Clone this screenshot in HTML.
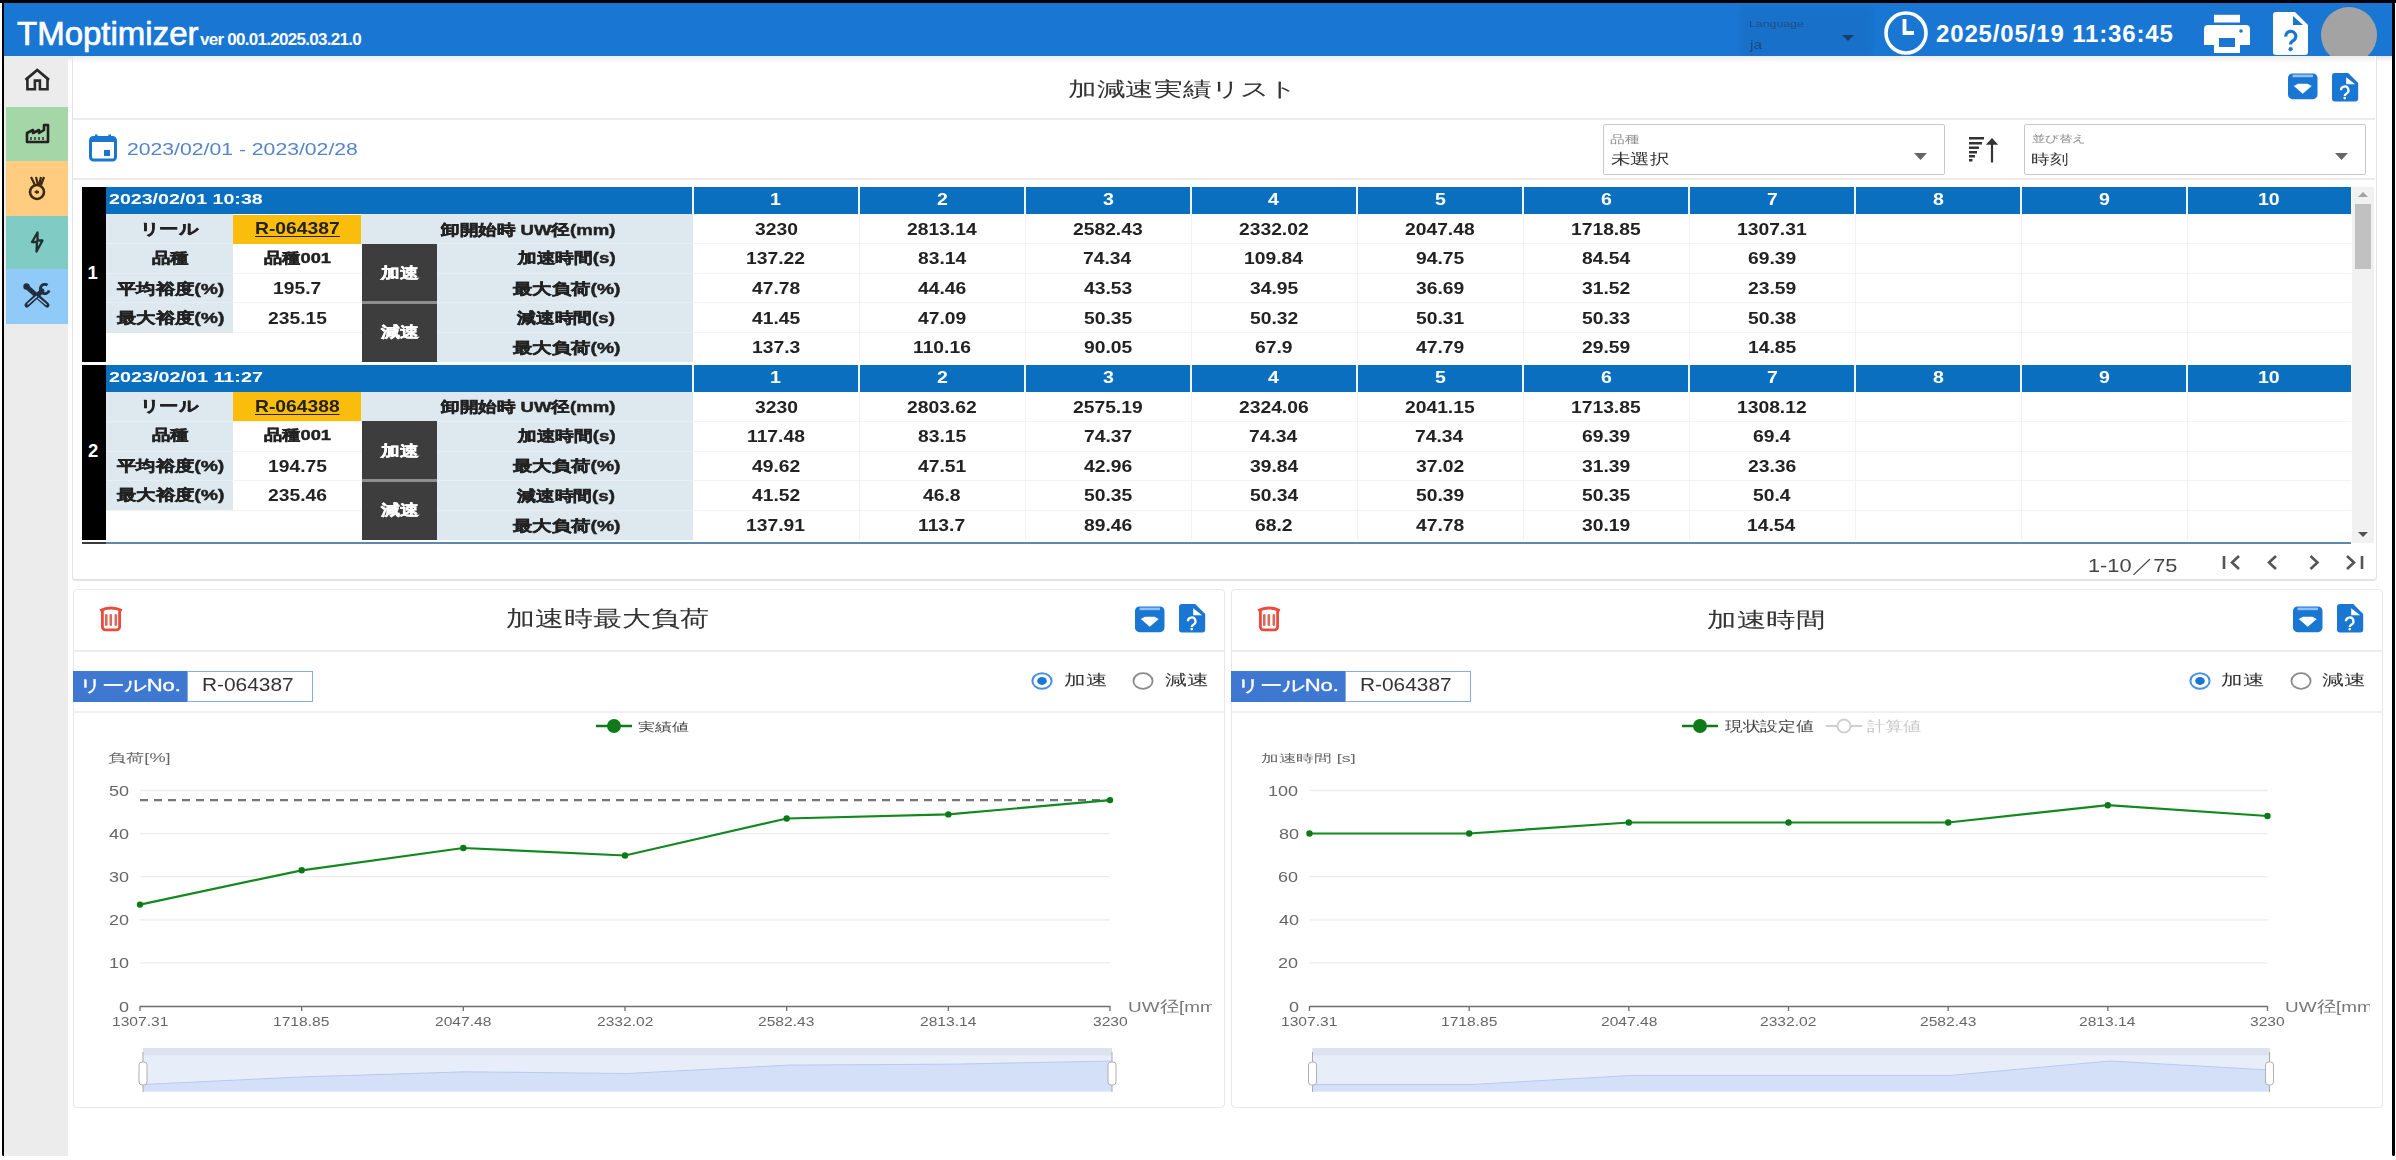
<!DOCTYPE html><html><head><meta charset="utf-8"><style>
html,body{margin:0;padding:0;}body{width:2396px;height:1160px;position:relative;overflow:hidden;background:#fff;font-family:"Liberation Sans",sans-serif;}
</style></head><body>
<div style="position:absolute;left:0px;top:0px;width:2396px;height:3px;background:#000"></div>
<div style="position:absolute;left:1.5px;top:0px;width:3px;height:1156px;background:#000;border-radius:0 0 2px 2px"></div>
<div style="position:absolute;left:2392px;top:0px;width:3.2px;height:1156px;background:#000;border-radius:0 0 2px 2px"></div>
<div style="position:absolute;left:4px;top:3px;width:2388px;height:53px;background:#1976d2"></div>
<div style="position:absolute;left:4px;top:56px;width:2388px;height:6px;background:linear-gradient(rgba(0,0,0,0.10),rgba(0,0,0,0))"></div>
<div style="position:absolute;top:17.07px;font-size:33px;line-height:33px;color:#fff;font-weight:normal;white-space:nowrap;left:17.00px;-webkit-text-stroke:0.7px #fff;">TMoptimizer</div>
<div style="position:absolute;top:30.61px;font-size:17px;line-height:17px;color:#fff;font-weight:bold;white-space:nowrap;letter-spacing:-0.72px;left:200.00px;">ver 00.01.2025.03.21.0</div>
<div style="position:absolute;left:1741px;top:7px;width:131px;height:48px;background:rgba(10,40,90,0.07);border-radius:4px;filter:blur(2px)"></div>
<div style="position:absolute;left:1749.26px;top:19.02px;font-size:9.44px;line-height:9.44px;color:#1d4f86;font-weight:normal;white-space:nowrap;transform-origin:0 0;transform:scaleX(1.3073);">Language</div>
<div style="position:absolute;left:1749.71px;top:39.01px;font-size:12.77px;line-height:12.77px;color:#1d4a7e;font-weight:normal;white-space:nowrap;transform-origin:0 0;transform:scaleX(1.2056);">ja</div>
<svg style="position:absolute;left:1842px;top:35px;overflow:visible" width="12" height="6" viewBox="0 0 12 6"><path d="M0 0H12L6 6Z" fill="#173f6e"/></svg>
<svg style="position:absolute;left:1882px;top:10px;overflow:visible" width="48" height="46" viewBox="0 0 48 46"><circle cx="24" cy="23" r="20" fill="none" stroke="#fff" stroke-width="3.6"/><path d="M22.5 9V23H32" fill="none" stroke="#fff" stroke-width="3.8"/></svg>
<div style="position:absolute;top:21.98px;font-size:24px;line-height:24px;color:#fff;font-weight:bold;white-space:nowrap;letter-spacing:0.85px;left:1936.00px;">2025/05/19 11:36:45</div>
<svg style="position:absolute;left:2204px;top:14px;overflow:visible" width="46" height="40" viewBox="0 0 46 40"><rect x="10" y="0.8" width="26" height="7.7" fill="#fff"/><path d="M4 11H42A4 4 0 0 1 46 15V31H36V24H10V31H0V15A4 4 0 0 1 4 11Z" fill="#fff"/><circle cx="37" cy="17" r="1.8" fill="#1976d2"/><rect x="10" y="24" width="26" height="15" fill="#fff"/><rect x="15" y="24" width="16" height="9" fill="#1976d2"/></svg>
<svg style="position:absolute;left:2273px;top:12px;overflow:visible" width="36" height="43" viewBox="0 0 36 43"><path d="M3 0H22L35 13V40A3 3 0 0 1 32 43H3A3 3 0 0 1 0 40V3A3 3 0 0 1 3 0Z" fill="#fff"/><path d="M20 4V13H30Z" fill="#1976d2"/><path d="M12.8 24.6A5 5 0 1 1 19.6 28.9C18.1 29.9 17.6 30.6 17.6 32.6" fill="none" stroke="#1976d2" stroke-width="3.2"/><circle cx="17.6" cy="37.2" r="2.1" fill="#1976d2"/></svg>
<div style="position:absolute;left:2300px;top:3px;width:92px;height:53px;overflow:hidden"><div style="position:absolute;left:21.4px;top:3.6px;width:56px;height:56px;border-radius:50%;background:#a3a3a3"></div></div>
<div style="position:absolute;left:4px;top:56px;width:64px;height:1100px;background:#ececec"></div>
<div style="position:absolute;left:6px;top:107px;width:62px;height:54px;background:#a5d6a7"></div>
<div style="position:absolute;left:6px;top:161px;width:62px;height:55px;background:#ffcc80"></div>
<div style="position:absolute;left:6px;top:216px;width:62px;height:53px;background:#80cbc4"></div>
<div style="position:absolute;left:6px;top:269px;width:62px;height:55px;background:#90caf9"></div>
<svg style="position:absolute;left:18px;top:60px;overflow:visible" width="40" height="40" viewBox="0 0 40 40"><path d="M7.5 19.9L19.25 10L31 19.9" fill="none" stroke="#2a2a2a" stroke-width="2.7" stroke-linejoin="miter"/><path d="M9.4 18.4V29.2H16.9V20.6H21.9V29.2H29.5V18.4" fill="none" stroke="#2a2a2a" stroke-width="2.6"/></svg>
<svg style="position:absolute;left:24px;top:122px;overflow:visible" width="26" height="24" viewBox="0 0 26 24"><path d="M3 20V11L9 8V11L15 8V11L20 8V3H24V20Z" fill="none" stroke="#222" stroke-width="2.6" stroke-linejoin="round"/><path d="M7 15V18M11 15V18M15 15V18M19 15V18" stroke="#222" stroke-width="1.4"/></svg>
<svg style="position:absolute;left:26px;top:175px;overflow:visible" width="22" height="27" viewBox="0 0 22 27"><path d="M5 2L9 10M10 2L12 10M15 2L13 10M18 2L15 10" stroke="#3a2a10" stroke-width="2.2"/><ellipse cx="11" cy="17" rx="7" ry="7" fill="none" stroke="#3a2a10" stroke-width="2.6"/><path d="M8 17L11 15V19Z" fill="#3a2a10"/><circle cx="11.5" cy="17" r="1.6" fill="#3a2a10"/></svg>
<svg style="position:absolute;left:18px;top:222px;overflow:visible" width="40" height="40" viewBox="0 0 40 40"><path d="M19.5 10.5L14 20H19L18.5 29.5L24.5 18.5H19.5Z" fill="none" stroke="#1f2f2f" stroke-width="2.3" stroke-linejoin="round"/></svg>
<svg style="position:absolute;left:18px;top:278px;overflow:visible" width="40" height="36" viewBox="0 0 40 36"><path d="M9 9L29 27" stroke="#1f2f3f" stroke-width="5" stroke-linecap="round"/><path d="M18.5 18.5L28 26.5" stroke="#90caf9" stroke-width="1.5" stroke-linecap="round"/><path d="M9 27L24 13" stroke="#1f2f3f" stroke-width="5" stroke-linecap="round"/><path d="M10 26L18.5 18.5" stroke="#90caf9" stroke-width="1.5" stroke-linecap="round"/><path d="M29.5 7.2A4.6 4.6 0 1 0 31.2 12.5" fill="none" stroke="#1f2f3f" stroke-width="2.8"/><circle cx="8.5" cy="8.5" r="3.2" fill="#1f2f3f"/></svg>
<div style="position:absolute;left:72px;top:56px;width:2303px;height:523px;border:1px solid #e3e3e3;border-width:0 1px 2px 1px;border-top:none;border-radius:0 0 4px 4px;background:#fff"></div>
<div style="position:absolute;left:73px;top:56px;width:2302px;height:7px;background:linear-gradient(rgba(0,0,0,0.07),rgba(0,0,0,0))"></div>
<div style="position:absolute;left:1067.67px;top:79.48px;font-size:20.39px;line-height:20.39px;color:#333;font-weight:normal;white-space:nowrap;transform-origin:0 0;transform:scaleX(1.4321);">加減速実績リスト</div>
<div style="position:absolute;left:73px;top:118px;width:2302px;height:2px;background:#ececec"></div>
<div style="position:absolute;left:73px;top:178px;width:2302px;height:2px;background:#ececec"></div>
<svg style="position:absolute;left:2288.2px;top:73.3px;overflow:visible" width="29.5" height="26.2" viewBox="0 0 29.5 26.2"><rect x="0" y="0.5" width="29.5" height="25.7" rx="4.5" fill="#1976d2"/><rect x="4.5" y="1.6" width="20.5" height="2.6" fill="#8fc1f1"/><path d="M5.8 13.1L10 10.741999999999999H19.5L23.7 13.1L14.75 20.698Z" fill="#fff"/></svg>
<svg style="position:absolute;left:2331.6px;top:72.8px;overflow:visible" width="26.2" height="28.6" viewBox="0 0 26.2 28.6"><path d="M3 0H16.2L26.2 10V25.6A3 3 0 0 1 23.2 28.6H3A3 3 0 0 1 0 25.6V3A3 3 0 0 1 3 0Z" fill="#1976d2"/><path d="M14.2 4.3V11.3H23.2Z" fill="#fff"/><path d="M8.9 17.3A3.8 3.8 0 1 1 14.4 20.7C13.2 21.4 12.7 22 12.7 23.1" fill="none" stroke="#fff" stroke-width="2.2"/><circle cx="12.7" cy="25.1" r="1.3" fill="#fff"/></svg>
<svg style="position:absolute;left:88px;top:133px;overflow:visible" width="30" height="29" viewBox="0 0 30 29"><rect x="2.5" y="4.5" width="25" height="22.5" rx="3" fill="none" stroke="#1976d2" stroke-width="3"/><rect x="2.5" y="4.5" width="25" height="4.5" fill="#1976d2"/><rect x="7" y="1.5" width="2.6" height="5" fill="#1976d2"/><rect x="20.4" y="1.5" width="2.6" height="5" fill="#1976d2"/><rect x="16" y="17" width="6" height="6" fill="#1976d2"/></svg>
<div style="position:absolute;left:126.79px;top:141.86px;font-size:15.81px;line-height:15.81px;color:#5585c9;font-weight:normal;white-space:nowrap;transform-origin:0 0;transform:scaleX(1.3407);">2023/02/01 - 2023/02/28</div>
<div style="position:absolute;left:1603px;top:124px;width:340px;height:49px;border:1px solid #c9c9c9;border-radius:2px"></div>
<svg style="position:absolute;left:1914px;top:153px;overflow:visible" width="13" height="7" viewBox="0 0 13 7"><path d="M0 0H13L6.5 7Z" fill="#666"/></svg>
<div style="position:absolute;left:2024px;top:124px;width:340px;height:49px;border:1px solid #c9c9c9;border-radius:2px"></div>
<svg style="position:absolute;left:2335px;top:153px;overflow:visible" width="13" height="7" viewBox="0 0 13 7"><path d="M0 0H13L6.5 7Z" fill="#666"/></svg>
<div style="position:absolute;left:1610.28px;top:134.30px;font-size:10.75px;line-height:10.75px;color:#8a8a8a;font-weight:normal;white-space:nowrap;transform-origin:0 0;transform:scaleX(1.3348);">品種</div>
<div style="position:absolute;left:1610.66px;top:152.46px;font-size:14.59px;line-height:14.59px;color:#333;font-weight:normal;white-space:nowrap;transform-origin:0 0;transform:scaleX(1.2989);">未選択</div>
<div style="position:absolute;left:2032.11px;top:134.33px;font-size:10.40px;line-height:10.40px;color:#8a8a8a;font-weight:normal;white-space:nowrap;transform-origin:0 0;transform:scaleX(1.3446);">並び替え</div>
<div style="position:absolute;left:2031.34px;top:152.75px;font-size:13.80px;line-height:13.80px;color:#333;font-weight:normal;white-space:nowrap;transform-origin:0 0;transform:scaleX(1.3228);">時刻</div>
<svg style="position:absolute;left:1966px;top:134px;overflow:visible" width="36" height="32" viewBox="0 0 36 32"><g fill="#333"><rect x="3" y="3" width="15" height="2.5"/><rect x="3" y="8" width="13" height="2.5"/><rect x="3" y="12.5" width="10" height="2.5"/><rect x="3" y="17" width="8" height="2.5"/><rect x="3" y="21" width="6" height="2.5"/><rect x="3" y="25" width="3.5" height="2.5"/></g><path d="M26 28.5V8" stroke="#333" stroke-width="2.2"/><path d="M19.8 10.8L26 4L32.2 10.8Z" fill="#333"/></svg>
<div style="position:absolute;left:82px;top:187px;width:24px;height:175.25px;background:#000"></div>
<div style="position:absolute;left:87.54px;top:264.34px;font-size:18.50px;line-height:18.50px;color:#fff;font-weight:bold;white-space:nowrap;transform-origin:0 0;transform:scaleX(1.0000);">1</div>
<div style="position:absolute;left:106px;top:187px;width:2245px;height:27px;background:#0b6fbf"></div>
<div style="position:absolute;left:109.26px;top:192.32px;font-size:14.40px;line-height:14.40px;color:#fff;font-weight:bold;white-space:nowrap;transform-origin:0 0;transform:scaleX(1.3623);">2023/02/01 10:38</div>
<div style="position:absolute;left:692.0px;top:187px;width:2px;height:27px;background:#eef5fc"></div>
<div style="position:absolute;left:770.23px;top:191.21px;font-size:17.00px;line-height:17.00px;color:#fff;font-weight:bold;white-space:nowrap;transform-origin:0 0;transform:scaleX(1.1500);">1</div>
<div style="position:absolute;left:858.0px;top:187px;width:2px;height:27px;background:#eef5fc"></div>
<div style="position:absolute;left:936.62px;top:191.21px;font-size:17.00px;line-height:17.00px;color:#fff;font-weight:bold;white-space:nowrap;transform-origin:0 0;transform:scaleX(1.1500);">2</div>
<div style="position:absolute;left:1024.0px;top:187px;width:2px;height:27px;background:#eef5fc"></div>
<div style="position:absolute;left:1102.72px;top:191.21px;font-size:17.00px;line-height:17.00px;color:#fff;font-weight:bold;white-space:nowrap;transform-origin:0 0;transform:scaleX(1.1500);">3</div>
<div style="position:absolute;left:1190.0px;top:187px;width:2px;height:27px;background:#eef5fc"></div>
<div style="position:absolute;left:1268.43px;top:191.21px;font-size:17.00px;line-height:17.00px;color:#fff;font-weight:bold;white-space:nowrap;transform-origin:0 0;transform:scaleX(1.1500);">4</div>
<div style="position:absolute;left:1356.0px;top:187px;width:2px;height:27px;background:#eef5fc"></div>
<div style="position:absolute;left:1434.53px;top:191.21px;font-size:17.00px;line-height:17.00px;color:#fff;font-weight:bold;white-space:nowrap;transform-origin:0 0;transform:scaleX(1.1500);">5</div>
<div style="position:absolute;left:1522.0px;top:187px;width:2px;height:27px;background:#eef5fc"></div>
<div style="position:absolute;left:1600.62px;top:191.21px;font-size:17.00px;line-height:17.00px;color:#fff;font-weight:bold;white-space:nowrap;transform-origin:0 0;transform:scaleX(1.1500);">6</div>
<div style="position:absolute;left:1688.0px;top:187px;width:2px;height:27px;background:#eef5fc"></div>
<div style="position:absolute;left:1766.53px;top:191.21px;font-size:17.00px;line-height:17.00px;color:#fff;font-weight:bold;white-space:nowrap;transform-origin:0 0;transform:scaleX(1.1500);">7</div>
<div style="position:absolute;left:1854.0px;top:187px;width:2px;height:27px;background:#eef5fc"></div>
<div style="position:absolute;left:1932.53px;top:191.21px;font-size:17.00px;line-height:17.00px;color:#fff;font-weight:bold;white-space:nowrap;transform-origin:0 0;transform:scaleX(1.1500);">8</div>
<div style="position:absolute;left:2020.0px;top:187px;width:2px;height:27px;background:#eef5fc"></div>
<div style="position:absolute;left:2098.62px;top:191.21px;font-size:17.00px;line-height:17.00px;color:#fff;font-weight:bold;white-space:nowrap;transform-origin:0 0;transform:scaleX(1.1500);">9</div>
<div style="position:absolute;left:2186.0px;top:187px;width:2px;height:27px;background:#eef5fc"></div>
<div style="position:absolute;left:2257.89px;top:191.21px;font-size:17.00px;line-height:17.00px;color:#fff;font-weight:bold;white-space:nowrap;transform-origin:0 0;transform:scaleX(1.1500);">10</div>
<div style="position:absolute;left:106px;top:243.15px;width:2245px;height:1px;background:#f5f2f2"></div>
<div style="position:absolute;left:106px;top:272.8px;width:2245px;height:1px;background:#f5f2f2"></div>
<div style="position:absolute;left:106px;top:302.45px;width:2245px;height:1px;background:#f5f2f2"></div>
<div style="position:absolute;left:106px;top:332.1px;width:2245px;height:1px;background:#f5f2f2"></div>
<div style="position:absolute;left:858.5px;top:214px;width:1px;height:148.25px;background:#f8f0f0"></div>
<div style="position:absolute;left:1024.5px;top:214px;width:1px;height:148.25px;background:#f8f0f0"></div>
<div style="position:absolute;left:1190.5px;top:214px;width:1px;height:148.25px;background:#f8f0f0"></div>
<div style="position:absolute;left:1356.5px;top:214px;width:1px;height:148.25px;background:#f8f0f0"></div>
<div style="position:absolute;left:1522.5px;top:214px;width:1px;height:148.25px;background:#f8f0f0"></div>
<div style="position:absolute;left:1688.5px;top:214px;width:1px;height:148.25px;background:#f8f0f0"></div>
<div style="position:absolute;left:1854.5px;top:214px;width:1px;height:148.25px;background:#f8f0f0"></div>
<div style="position:absolute;left:2020.5px;top:214px;width:1px;height:148.25px;background:#f8f0f0"></div>
<div style="position:absolute;left:2186.5px;top:214px;width:1px;height:148.25px;background:#f8f0f0"></div>
<div style="position:absolute;left:106px;top:214px;width:127px;height:118.6px;background:#dde8ef"></div>
<div style="position:absolute;left:106px;top:243.15px;width:127px;height:1px;background:#e6eef3"></div>
<div style="position:absolute;left:106px;top:272.8px;width:127px;height:1px;background:#e6eef3"></div>
<div style="position:absolute;left:106px;top:302.45px;width:127px;height:1px;background:#e6eef3"></div>
<div style="position:absolute;left:233px;top:214.5px;width:128px;height:29.15px;background:#fbbd0c"></div>
<div style="position:absolute;left:361px;top:214px;width:332px;height:29.65px;background:#dde8ef"></div>
<div style="position:absolute;left:437px;top:243.65px;width:256px;height:118.6px;background:#dde8ef"></div>
<div style="position:absolute;left:437px;top:243.15px;width:256px;height:1px;background:#e8eef2"></div>
<div style="position:absolute;left:437px;top:272.8px;width:256px;height:1px;background:#e8eef2"></div>
<div style="position:absolute;left:437px;top:302.45px;width:256px;height:1px;background:#e8eef2"></div>
<div style="position:absolute;left:437px;top:332.1px;width:256px;height:1px;background:#e8eef2"></div>
<div style="position:absolute;left:362px;top:243.65px;width:75px;height:59.3px;background:#3d3d3d"></div>
<div style="position:absolute;left:362px;top:302.95px;width:75px;height:59.3px;background:#3d3d3d"></div>
<div style="position:absolute;left:362px;top:301.45px;width:75px;height:3px;background:#8e8e8e"></div>
<div style="position:absolute;left:139.59px;top:220.60px;font-size:15.00px;line-height:15.00px;color:#222;font-weight:bold;white-space:nowrap;transform-origin:0 0;transform:scaleX(1.2886);-webkit-text-stroke:0.45px #222;">リール</div>
<div style="position:absolute;left:152.10px;top:249.73px;font-size:15.00px;line-height:15.00px;color:#222;font-weight:bold;white-space:nowrap;transform-origin:0 0;transform:scaleX(1.2279);-webkit-text-stroke:0.45px #222;">品種</div>
<div style="position:absolute;left:117.34px;top:280.63px;font-size:15.00px;line-height:15.00px;color:#222;font-weight:bold;white-space:nowrap;transform-origin:0 0;transform:scaleX(1.2869);-webkit-text-stroke:0.45px #222;">平均裕度(%)</div>
<div style="position:absolute;left:117.15px;top:309.68px;font-size:15.00px;line-height:15.00px;color:#222;font-weight:bold;white-space:nowrap;transform-origin:0 0;transform:scaleX(1.2893);-webkit-text-stroke:0.45px #222;">最大裕度(%)</div>
<div style="position:absolute;left:255.09px;top:220.28px;font-size:16.20px;line-height:16.20px;color:#222;font-weight:bold;white-space:nowrap;transform-origin:0 0;transform:scaleX(1.1926);text-decoration:underline;text-underline-offset:2px;">R-064387</div>
<div style="position:absolute;left:263.70px;top:249.73px;font-size:15.00px;line-height:15.00px;color:#222;font-weight:bold;white-space:nowrap;transform-origin:0 0;transform:scaleX(1.2162);-webkit-text-stroke:0.45px #222;">品種001</div>
<div style="position:absolute;left:273.15px;top:280.29px;font-size:16.20px;line-height:16.20px;color:#222;font-weight:bold;white-space:nowrap;transform-origin:0 0;transform:scaleX(1.1900);">195.7</div>
<div style="position:absolute;left:267.98px;top:309.79px;font-size:16.20px;line-height:16.20px;color:#222;font-weight:bold;white-space:nowrap;transform-origin:0 0;transform:scaleX(1.1900);">235.15</div>
<div style="position:absolute;left:440.82px;top:221.58px;font-size:15.00px;line-height:15.00px;color:#222;font-weight:bold;white-space:nowrap;transform-origin:0 0;transform:scaleX(1.2386);-webkit-text-stroke:0.45px #222;">卸開始時 UW径(mm)</div>
<div style="position:absolute;left:517.61px;top:250.28px;font-size:15.00px;line-height:15.00px;color:#222;font-weight:bold;white-space:nowrap;transform-origin:0 0;transform:scaleX(1.2465);-webkit-text-stroke:0.45px #222;">加速時間(s)</div>
<div style="position:absolute;left:512.75px;top:280.55px;font-size:15.00px;line-height:15.00px;color:#222;font-weight:bold;white-space:nowrap;transform-origin:0 0;transform:scaleX(1.2905);-webkit-text-stroke:0.45px #222;">最大負荷(%)</div>
<div style="position:absolute;left:517.24px;top:309.88px;font-size:15.00px;line-height:15.00px;color:#222;font-weight:bold;white-space:nowrap;transform-origin:0 0;transform:scaleX(1.2513);-webkit-text-stroke:0.45px #222;">減速時間(s)</div>
<div style="position:absolute;left:512.75px;top:340.15px;font-size:15.00px;line-height:15.00px;color:#222;font-weight:bold;white-space:nowrap;transform-origin:0 0;transform:scaleX(1.2905);-webkit-text-stroke:0.45px #222;">最大負荷(%)</div>
<div style="position:absolute;left:381.41px;top:265.13px;font-size:15.00px;line-height:15.00px;color:#fff;font-weight:bold;white-space:nowrap;transform-origin:0 0;transform:scaleX(1.2475);-webkit-text-stroke:0.45px #fff;">加速</div>
<div style="position:absolute;left:381.04px;top:324.23px;font-size:15.00px;line-height:15.00px;color:#fff;font-weight:bold;white-space:nowrap;transform-origin:0 0;transform:scaleX(1.2600);-webkit-text-stroke:0.45px #fff;">減速</div>
<div style="position:absolute;left:754.71px;top:220.89px;font-size:16.20px;line-height:16.20px;color:#222;font-weight:bold;white-space:nowrap;transform-origin:0 0;transform:scaleX(1.1900);">3230</div>
<div style="position:absolute;left:906.83px;top:220.89px;font-size:16.20px;line-height:16.20px;color:#222;font-weight:bold;white-space:nowrap;transform-origin:0 0;transform:scaleX(1.1900);">2813.14</div>
<div style="position:absolute;left:1073.22px;top:220.89px;font-size:16.20px;line-height:16.20px;color:#222;font-weight:bold;white-space:nowrap;transform-origin:0 0;transform:scaleX(1.1900);">2582.43</div>
<div style="position:absolute;left:1239.22px;top:220.89px;font-size:16.20px;line-height:16.20px;color:#222;font-weight:bold;white-space:nowrap;transform-origin:0 0;transform:scaleX(1.1900);">2332.02</div>
<div style="position:absolute;left:1405.12px;top:220.89px;font-size:16.20px;line-height:16.20px;color:#222;font-weight:bold;white-space:nowrap;transform-origin:0 0;transform:scaleX(1.1900);">2047.48</div>
<div style="position:absolute;left:1570.83px;top:220.89px;font-size:16.20px;line-height:16.20px;color:#222;font-weight:bold;white-space:nowrap;transform-origin:0 0;transform:scaleX(1.1900);">1718.85</div>
<div style="position:absolute;left:1736.83px;top:220.89px;font-size:16.20px;line-height:16.20px;color:#222;font-weight:bold;white-space:nowrap;transform-origin:0 0;transform:scaleX(1.1900);">1307.31</div>
<div style="position:absolute;left:746.29px;top:250.49px;font-size:16.20px;line-height:16.20px;color:#222;font-weight:bold;white-space:nowrap;transform-origin:0 0;transform:scaleX(1.1900);">137.22</div>
<div style="position:absolute;left:917.55px;top:250.49px;font-size:16.20px;line-height:16.20px;color:#222;font-weight:bold;white-space:nowrap;transform-origin:0 0;transform:scaleX(1.1900);">83.14</div>
<div style="position:absolute;left:1083.46px;top:250.49px;font-size:16.20px;line-height:16.20px;color:#222;font-weight:bold;white-space:nowrap;transform-origin:0 0;transform:scaleX(1.1900);">74.34</div>
<div style="position:absolute;left:1243.90px;top:250.49px;font-size:16.20px;line-height:16.20px;color:#222;font-weight:bold;white-space:nowrap;transform-origin:0 0;transform:scaleX(1.1900);">109.84</div>
<div style="position:absolute;left:1415.84px;top:250.49px;font-size:16.20px;line-height:16.20px;color:#222;font-weight:bold;white-space:nowrap;transform-origin:0 0;transform:scaleX(1.1900);">94.75</div>
<div style="position:absolute;left:1581.55px;top:250.49px;font-size:16.20px;line-height:16.20px;color:#222;font-weight:bold;white-space:nowrap;transform-origin:0 0;transform:scaleX(1.1900);">84.54</div>
<div style="position:absolute;left:1747.94px;top:250.49px;font-size:16.20px;line-height:16.20px;color:#222;font-weight:bold;white-space:nowrap;transform-origin:0 0;transform:scaleX(1.1900);">69.39</div>
<div style="position:absolute;left:752.03px;top:280.09px;font-size:16.20px;line-height:16.20px;color:#222;font-weight:bold;white-space:nowrap;transform-origin:0 0;transform:scaleX(1.1900);">47.78</div>
<div style="position:absolute;left:918.13px;top:280.09px;font-size:16.20px;line-height:16.20px;color:#222;font-weight:bold;white-space:nowrap;transform-origin:0 0;transform:scaleX(1.1900);">44.46</div>
<div style="position:absolute;left:1084.13px;top:280.09px;font-size:16.20px;line-height:16.20px;color:#222;font-weight:bold;white-space:nowrap;transform-origin:0 0;transform:scaleX(1.1900);">43.53</div>
<div style="position:absolute;left:1249.94px;top:280.09px;font-size:16.20px;line-height:16.20px;color:#222;font-weight:bold;white-space:nowrap;transform-origin:0 0;transform:scaleX(1.1900);">34.95</div>
<div style="position:absolute;left:1416.03px;top:280.09px;font-size:16.20px;line-height:16.20px;color:#222;font-weight:bold;white-space:nowrap;transform-origin:0 0;transform:scaleX(1.1900);">36.69</div>
<div style="position:absolute;left:1582.03px;top:280.09px;font-size:16.20px;line-height:16.20px;color:#222;font-weight:bold;white-space:nowrap;transform-origin:0 0;transform:scaleX(1.1900);">31.52</div>
<div style="position:absolute;left:1747.94px;top:280.09px;font-size:16.20px;line-height:16.20px;color:#222;font-weight:bold;white-space:nowrap;transform-origin:0 0;transform:scaleX(1.1900);">23.59</div>
<div style="position:absolute;left:752.03px;top:309.69px;font-size:16.20px;line-height:16.20px;color:#222;font-weight:bold;white-space:nowrap;transform-origin:0 0;transform:scaleX(1.1900);">41.45</div>
<div style="position:absolute;left:918.13px;top:309.69px;font-size:16.20px;line-height:16.20px;color:#222;font-weight:bold;white-space:nowrap;transform-origin:0 0;transform:scaleX(1.1900);">47.09</div>
<div style="position:absolute;left:1083.84px;top:309.69px;font-size:16.20px;line-height:16.20px;color:#222;font-weight:bold;white-space:nowrap;transform-origin:0 0;transform:scaleX(1.1900);">50.35</div>
<div style="position:absolute;left:1249.94px;top:309.69px;font-size:16.20px;line-height:16.20px;color:#222;font-weight:bold;white-space:nowrap;transform-origin:0 0;transform:scaleX(1.1900);">50.32</div>
<div style="position:absolute;left:1415.84px;top:309.69px;font-size:16.20px;line-height:16.20px;color:#222;font-weight:bold;white-space:nowrap;transform-origin:0 0;transform:scaleX(1.1900);">50.31</div>
<div style="position:absolute;left:1581.94px;top:309.69px;font-size:16.20px;line-height:16.20px;color:#222;font-weight:bold;white-space:nowrap;transform-origin:0 0;transform:scaleX(1.1900);">50.33</div>
<div style="position:absolute;left:1747.84px;top:309.69px;font-size:16.20px;line-height:16.20px;color:#222;font-weight:bold;white-space:nowrap;transform-origin:0 0;transform:scaleX(1.1900);">50.38</div>
<div style="position:absolute;left:751.65px;top:339.29px;font-size:16.20px;line-height:16.20px;color:#222;font-weight:bold;white-space:nowrap;transform-origin:0 0;transform:scaleX(1.1900);">137.3</div>
<div style="position:absolute;left:912.82px;top:339.29px;font-size:16.20px;line-height:16.20px;color:#222;font-weight:bold;white-space:nowrap;transform-origin:0 0;transform:scaleX(1.1900);">110.16</div>
<div style="position:absolute;left:1083.84px;top:339.29px;font-size:16.20px;line-height:16.20px;color:#222;font-weight:bold;white-space:nowrap;transform-origin:0 0;transform:scaleX(1.1900);">90.05</div>
<div style="position:absolute;left:1255.30px;top:339.29px;font-size:16.20px;line-height:16.20px;color:#222;font-weight:bold;white-space:nowrap;transform-origin:0 0;transform:scaleX(1.1900);">67.9</div>
<div style="position:absolute;left:1416.13px;top:339.29px;font-size:16.20px;line-height:16.20px;color:#222;font-weight:bold;white-space:nowrap;transform-origin:0 0;transform:scaleX(1.1900);">47.79</div>
<div style="position:absolute;left:1581.94px;top:339.29px;font-size:16.20px;line-height:16.20px;color:#222;font-weight:bold;white-space:nowrap;transform-origin:0 0;transform:scaleX(1.1900);">29.59</div>
<div style="position:absolute;left:1747.55px;top:339.29px;font-size:16.20px;line-height:16.20px;color:#222;font-weight:bold;white-space:nowrap;transform-origin:0 0;transform:scaleX(1.1900);">14.85</div>
<div style="position:absolute;left:82px;top:364.7px;width:24px;height:175.25px;background:#000"></div>
<div style="position:absolute;left:87.91px;top:442.04px;font-size:18.50px;line-height:18.50px;color:#fff;font-weight:bold;white-space:nowrap;transform-origin:0 0;transform:scaleX(1.0000);">2</div>
<div style="position:absolute;left:106px;top:364.7px;width:2245px;height:27px;background:#0b6fbf"></div>
<div style="position:absolute;left:109.26px;top:370.02px;font-size:14.40px;line-height:14.40px;color:#fff;font-weight:bold;white-space:nowrap;transform-origin:0 0;transform:scaleX(1.3738);">2023/02/01 11:27</div>
<div style="position:absolute;left:692.0px;top:364.7px;width:2px;height:27px;background:#eef5fc"></div>
<div style="position:absolute;left:770.23px;top:368.91px;font-size:17.00px;line-height:17.00px;color:#fff;font-weight:bold;white-space:nowrap;transform-origin:0 0;transform:scaleX(1.1500);">1</div>
<div style="position:absolute;left:858.0px;top:364.7px;width:2px;height:27px;background:#eef5fc"></div>
<div style="position:absolute;left:936.62px;top:368.91px;font-size:17.00px;line-height:17.00px;color:#fff;font-weight:bold;white-space:nowrap;transform-origin:0 0;transform:scaleX(1.1500);">2</div>
<div style="position:absolute;left:1024.0px;top:364.7px;width:2px;height:27px;background:#eef5fc"></div>
<div style="position:absolute;left:1102.72px;top:368.91px;font-size:17.00px;line-height:17.00px;color:#fff;font-weight:bold;white-space:nowrap;transform-origin:0 0;transform:scaleX(1.1500);">3</div>
<div style="position:absolute;left:1190.0px;top:364.7px;width:2px;height:27px;background:#eef5fc"></div>
<div style="position:absolute;left:1268.43px;top:368.91px;font-size:17.00px;line-height:17.00px;color:#fff;font-weight:bold;white-space:nowrap;transform-origin:0 0;transform:scaleX(1.1500);">4</div>
<div style="position:absolute;left:1356.0px;top:364.7px;width:2px;height:27px;background:#eef5fc"></div>
<div style="position:absolute;left:1434.53px;top:368.91px;font-size:17.00px;line-height:17.00px;color:#fff;font-weight:bold;white-space:nowrap;transform-origin:0 0;transform:scaleX(1.1500);">5</div>
<div style="position:absolute;left:1522.0px;top:364.7px;width:2px;height:27px;background:#eef5fc"></div>
<div style="position:absolute;left:1600.62px;top:368.91px;font-size:17.00px;line-height:17.00px;color:#fff;font-weight:bold;white-space:nowrap;transform-origin:0 0;transform:scaleX(1.1500);">6</div>
<div style="position:absolute;left:1688.0px;top:364.7px;width:2px;height:27px;background:#eef5fc"></div>
<div style="position:absolute;left:1766.53px;top:368.91px;font-size:17.00px;line-height:17.00px;color:#fff;font-weight:bold;white-space:nowrap;transform-origin:0 0;transform:scaleX(1.1500);">7</div>
<div style="position:absolute;left:1854.0px;top:364.7px;width:2px;height:27px;background:#eef5fc"></div>
<div style="position:absolute;left:1932.53px;top:368.91px;font-size:17.00px;line-height:17.00px;color:#fff;font-weight:bold;white-space:nowrap;transform-origin:0 0;transform:scaleX(1.1500);">8</div>
<div style="position:absolute;left:2020.0px;top:364.7px;width:2px;height:27px;background:#eef5fc"></div>
<div style="position:absolute;left:2098.62px;top:368.91px;font-size:17.00px;line-height:17.00px;color:#fff;font-weight:bold;white-space:nowrap;transform-origin:0 0;transform:scaleX(1.1500);">9</div>
<div style="position:absolute;left:2186.0px;top:364.7px;width:2px;height:27px;background:#eef5fc"></div>
<div style="position:absolute;left:2257.89px;top:368.91px;font-size:17.00px;line-height:17.00px;color:#fff;font-weight:bold;white-space:nowrap;transform-origin:0 0;transform:scaleX(1.1500);">10</div>
<div style="position:absolute;left:106px;top:420.84999999999997px;width:2245px;height:1px;background:#f5f2f2"></div>
<div style="position:absolute;left:106px;top:450.5px;width:2245px;height:1px;background:#f5f2f2"></div>
<div style="position:absolute;left:106px;top:480.15px;width:2245px;height:1px;background:#f5f2f2"></div>
<div style="position:absolute;left:106px;top:509.79999999999995px;width:2245px;height:1px;background:#f5f2f2"></div>
<div style="position:absolute;left:858.5px;top:391.7px;width:1px;height:148.25px;background:#f8f0f0"></div>
<div style="position:absolute;left:1024.5px;top:391.7px;width:1px;height:148.25px;background:#f8f0f0"></div>
<div style="position:absolute;left:1190.5px;top:391.7px;width:1px;height:148.25px;background:#f8f0f0"></div>
<div style="position:absolute;left:1356.5px;top:391.7px;width:1px;height:148.25px;background:#f8f0f0"></div>
<div style="position:absolute;left:1522.5px;top:391.7px;width:1px;height:148.25px;background:#f8f0f0"></div>
<div style="position:absolute;left:1688.5px;top:391.7px;width:1px;height:148.25px;background:#f8f0f0"></div>
<div style="position:absolute;left:1854.5px;top:391.7px;width:1px;height:148.25px;background:#f8f0f0"></div>
<div style="position:absolute;left:2020.5px;top:391.7px;width:1px;height:148.25px;background:#f8f0f0"></div>
<div style="position:absolute;left:2186.5px;top:391.7px;width:1px;height:148.25px;background:#f8f0f0"></div>
<div style="position:absolute;left:106px;top:391.7px;width:127px;height:118.6px;background:#dde8ef"></div>
<div style="position:absolute;left:106px;top:420.84999999999997px;width:127px;height:1px;background:#e6eef3"></div>
<div style="position:absolute;left:106px;top:450.5px;width:127px;height:1px;background:#e6eef3"></div>
<div style="position:absolute;left:106px;top:480.15px;width:127px;height:1px;background:#e6eef3"></div>
<div style="position:absolute;left:233px;top:392.2px;width:128px;height:29.15px;background:#fbbd0c"></div>
<div style="position:absolute;left:361px;top:391.7px;width:332px;height:29.65px;background:#dde8ef"></div>
<div style="position:absolute;left:437px;top:421.34999999999997px;width:256px;height:118.6px;background:#dde8ef"></div>
<div style="position:absolute;left:437px;top:420.84999999999997px;width:256px;height:1px;background:#e8eef2"></div>
<div style="position:absolute;left:437px;top:450.5px;width:256px;height:1px;background:#e8eef2"></div>
<div style="position:absolute;left:437px;top:480.15px;width:256px;height:1px;background:#e8eef2"></div>
<div style="position:absolute;left:437px;top:509.79999999999995px;width:256px;height:1px;background:#e8eef2"></div>
<div style="position:absolute;left:362px;top:421.34999999999997px;width:75px;height:59.3px;background:#3d3d3d"></div>
<div style="position:absolute;left:362px;top:480.65px;width:75px;height:59.3px;background:#3d3d3d"></div>
<div style="position:absolute;left:362px;top:479.15px;width:75px;height:3px;background:#8e8e8e"></div>
<div style="position:absolute;left:139.59px;top:398.30px;font-size:15.00px;line-height:15.00px;color:#222;font-weight:bold;white-space:nowrap;transform-origin:0 0;transform:scaleX(1.2886);-webkit-text-stroke:0.45px #222;">リール</div>
<div style="position:absolute;left:152.10px;top:427.43px;font-size:15.00px;line-height:15.00px;color:#222;font-weight:bold;white-space:nowrap;transform-origin:0 0;transform:scaleX(1.2279);-webkit-text-stroke:0.45px #222;">品種</div>
<div style="position:absolute;left:117.34px;top:458.33px;font-size:15.00px;line-height:15.00px;color:#222;font-weight:bold;white-space:nowrap;transform-origin:0 0;transform:scaleX(1.2869);-webkit-text-stroke:0.45px #222;">平均裕度(%)</div>
<div style="position:absolute;left:117.15px;top:487.38px;font-size:15.00px;line-height:15.00px;color:#222;font-weight:bold;white-space:nowrap;transform-origin:0 0;transform:scaleX(1.2893);-webkit-text-stroke:0.45px #222;">最大裕度(%)</div>
<div style="position:absolute;left:255.09px;top:397.98px;font-size:16.20px;line-height:16.20px;color:#222;font-weight:bold;white-space:nowrap;transform-origin:0 0;transform:scaleX(1.1899);text-decoration:underline;text-underline-offset:2px;">R-064388</div>
<div style="position:absolute;left:263.70px;top:427.43px;font-size:15.00px;line-height:15.00px;color:#222;font-weight:bold;white-space:nowrap;transform-origin:0 0;transform:scaleX(1.2162);-webkit-text-stroke:0.45px #222;">品種001</div>
<div style="position:absolute;left:267.69px;top:457.99px;font-size:16.20px;line-height:16.20px;color:#222;font-weight:bold;white-space:nowrap;transform-origin:0 0;transform:scaleX(1.1900);">194.75</div>
<div style="position:absolute;left:268.08px;top:487.49px;font-size:16.20px;line-height:16.20px;color:#222;font-weight:bold;white-space:nowrap;transform-origin:0 0;transform:scaleX(1.1900);">235.46</div>
<div style="position:absolute;left:440.82px;top:399.28px;font-size:15.00px;line-height:15.00px;color:#222;font-weight:bold;white-space:nowrap;transform-origin:0 0;transform:scaleX(1.2386);-webkit-text-stroke:0.45px #222;">卸開始時 UW径(mm)</div>
<div style="position:absolute;left:517.61px;top:427.98px;font-size:15.00px;line-height:15.00px;color:#222;font-weight:bold;white-space:nowrap;transform-origin:0 0;transform:scaleX(1.2465);-webkit-text-stroke:0.45px #222;">加速時間(s)</div>
<div style="position:absolute;left:512.75px;top:458.25px;font-size:15.00px;line-height:15.00px;color:#222;font-weight:bold;white-space:nowrap;transform-origin:0 0;transform:scaleX(1.2905);-webkit-text-stroke:0.45px #222;">最大負荷(%)</div>
<div style="position:absolute;left:517.24px;top:487.58px;font-size:15.00px;line-height:15.00px;color:#222;font-weight:bold;white-space:nowrap;transform-origin:0 0;transform:scaleX(1.2513);-webkit-text-stroke:0.45px #222;">減速時間(s)</div>
<div style="position:absolute;left:512.75px;top:517.85px;font-size:15.00px;line-height:15.00px;color:#222;font-weight:bold;white-space:nowrap;transform-origin:0 0;transform:scaleX(1.2905);-webkit-text-stroke:0.45px #222;">最大負荷(%)</div>
<div style="position:absolute;left:381.41px;top:442.83px;font-size:15.00px;line-height:15.00px;color:#fff;font-weight:bold;white-space:nowrap;transform-origin:0 0;transform:scaleX(1.2475);-webkit-text-stroke:0.45px #fff;">加速</div>
<div style="position:absolute;left:381.04px;top:501.93px;font-size:15.00px;line-height:15.00px;color:#fff;font-weight:bold;white-space:nowrap;transform-origin:0 0;transform:scaleX(1.2600);-webkit-text-stroke:0.45px #fff;">減速</div>
<div style="position:absolute;left:754.71px;top:398.59px;font-size:16.20px;line-height:16.20px;color:#222;font-weight:bold;white-space:nowrap;transform-origin:0 0;transform:scaleX(1.1900);">3230</div>
<div style="position:absolute;left:907.22px;top:398.59px;font-size:16.20px;line-height:16.20px;color:#222;font-weight:bold;white-space:nowrap;transform-origin:0 0;transform:scaleX(1.1900);">2803.62</div>
<div style="position:absolute;left:1073.22px;top:398.59px;font-size:16.20px;line-height:16.20px;color:#222;font-weight:bold;white-space:nowrap;transform-origin:0 0;transform:scaleX(1.1900);">2575.19</div>
<div style="position:absolute;left:1239.22px;top:398.59px;font-size:16.20px;line-height:16.20px;color:#222;font-weight:bold;white-space:nowrap;transform-origin:0 0;transform:scaleX(1.1900);">2324.06</div>
<div style="position:absolute;left:1405.12px;top:398.59px;font-size:16.20px;line-height:16.20px;color:#222;font-weight:bold;white-space:nowrap;transform-origin:0 0;transform:scaleX(1.1900);">2041.15</div>
<div style="position:absolute;left:1570.83px;top:398.59px;font-size:16.20px;line-height:16.20px;color:#222;font-weight:bold;white-space:nowrap;transform-origin:0 0;transform:scaleX(1.1900);">1713.85</div>
<div style="position:absolute;left:1736.93px;top:398.59px;font-size:16.20px;line-height:16.20px;color:#222;font-weight:bold;white-space:nowrap;transform-origin:0 0;transform:scaleX(1.1900);">1308.12</div>
<div style="position:absolute;left:746.72px;top:428.19px;font-size:16.20px;line-height:16.20px;color:#222;font-weight:bold;white-space:nowrap;transform-origin:0 0;transform:scaleX(1.1900);">117.48</div>
<div style="position:absolute;left:917.84px;top:428.19px;font-size:16.20px;line-height:16.20px;color:#222;font-weight:bold;white-space:nowrap;transform-origin:0 0;transform:scaleX(1.1900);">83.15</div>
<div style="position:absolute;left:1083.84px;top:428.19px;font-size:16.20px;line-height:16.20px;color:#222;font-weight:bold;white-space:nowrap;transform-origin:0 0;transform:scaleX(1.1900);">74.37</div>
<div style="position:absolute;left:1249.46px;top:428.19px;font-size:16.20px;line-height:16.20px;color:#222;font-weight:bold;white-space:nowrap;transform-origin:0 0;transform:scaleX(1.1900);">74.34</div>
<div style="position:absolute;left:1415.46px;top:428.19px;font-size:16.20px;line-height:16.20px;color:#222;font-weight:bold;white-space:nowrap;transform-origin:0 0;transform:scaleX(1.1900);">74.34</div>
<div style="position:absolute;left:1581.94px;top:428.19px;font-size:16.20px;line-height:16.20px;color:#222;font-weight:bold;white-space:nowrap;transform-origin:0 0;transform:scaleX(1.1900);">69.39</div>
<div style="position:absolute;left:1752.91px;top:428.19px;font-size:16.20px;line-height:16.20px;color:#222;font-weight:bold;white-space:nowrap;transform-origin:0 0;transform:scaleX(1.1900);">69.4</div>
<div style="position:absolute;left:752.13px;top:457.79px;font-size:16.20px;line-height:16.20px;color:#222;font-weight:bold;white-space:nowrap;transform-origin:0 0;transform:scaleX(1.1900);">49.62</div>
<div style="position:absolute;left:918.03px;top:457.79px;font-size:16.20px;line-height:16.20px;color:#222;font-weight:bold;white-space:nowrap;transform-origin:0 0;transform:scaleX(1.1900);">47.51</div>
<div style="position:absolute;left:1084.13px;top:457.79px;font-size:16.20px;line-height:16.20px;color:#222;font-weight:bold;white-space:nowrap;transform-origin:0 0;transform:scaleX(1.1900);">42.96</div>
<div style="position:absolute;left:1249.65px;top:457.79px;font-size:16.20px;line-height:16.20px;color:#222;font-weight:bold;white-space:nowrap;transform-origin:0 0;transform:scaleX(1.1900);">39.84</div>
<div style="position:absolute;left:1416.03px;top:457.79px;font-size:16.20px;line-height:16.20px;color:#222;font-weight:bold;white-space:nowrap;transform-origin:0 0;transform:scaleX(1.1900);">37.02</div>
<div style="position:absolute;left:1582.03px;top:457.79px;font-size:16.20px;line-height:16.20px;color:#222;font-weight:bold;white-space:nowrap;transform-origin:0 0;transform:scaleX(1.1900);">31.39</div>
<div style="position:absolute;left:1747.94px;top:457.79px;font-size:16.20px;line-height:16.20px;color:#222;font-weight:bold;white-space:nowrap;transform-origin:0 0;transform:scaleX(1.1900);">23.36</div>
<div style="position:absolute;left:752.13px;top:487.39px;font-size:16.20px;line-height:16.20px;color:#222;font-weight:bold;white-space:nowrap;transform-origin:0 0;transform:scaleX(1.1900);">41.52</div>
<div style="position:absolute;left:923.40px;top:487.39px;font-size:16.20px;line-height:16.20px;color:#222;font-weight:bold;white-space:nowrap;transform-origin:0 0;transform:scaleX(1.1900);">46.8</div>
<div style="position:absolute;left:1083.84px;top:487.39px;font-size:16.20px;line-height:16.20px;color:#222;font-weight:bold;white-space:nowrap;transform-origin:0 0;transform:scaleX(1.1900);">50.35</div>
<div style="position:absolute;left:1249.55px;top:487.39px;font-size:16.20px;line-height:16.20px;color:#222;font-weight:bold;white-space:nowrap;transform-origin:0 0;transform:scaleX(1.1900);">50.34</div>
<div style="position:absolute;left:1415.94px;top:487.39px;font-size:16.20px;line-height:16.20px;color:#222;font-weight:bold;white-space:nowrap;transform-origin:0 0;transform:scaleX(1.1900);">50.39</div>
<div style="position:absolute;left:1581.84px;top:487.39px;font-size:16.20px;line-height:16.20px;color:#222;font-weight:bold;white-space:nowrap;transform-origin:0 0;transform:scaleX(1.1900);">50.35</div>
<div style="position:absolute;left:1752.91px;top:487.39px;font-size:16.20px;line-height:16.20px;color:#222;font-weight:bold;white-space:nowrap;transform-origin:0 0;transform:scaleX(1.1900);">50.4</div>
<div style="position:absolute;left:746.19px;top:516.99px;font-size:16.20px;line-height:16.20px;color:#222;font-weight:bold;white-space:nowrap;transform-origin:0 0;transform:scaleX(1.1900);">137.91</div>
<div style="position:absolute;left:918.18px;top:516.99px;font-size:16.20px;line-height:16.20px;color:#222;font-weight:bold;white-space:nowrap;transform-origin:0 0;transform:scaleX(1.1900);">113.7</div>
<div style="position:absolute;left:1083.94px;top:516.99px;font-size:16.20px;line-height:16.20px;color:#222;font-weight:bold;white-space:nowrap;transform-origin:0 0;transform:scaleX(1.1900);">89.46</div>
<div style="position:absolute;left:1255.30px;top:516.99px;font-size:16.20px;line-height:16.20px;color:#222;font-weight:bold;white-space:nowrap;transform-origin:0 0;transform:scaleX(1.1900);">68.2</div>
<div style="position:absolute;left:1416.03px;top:516.99px;font-size:16.20px;line-height:16.20px;color:#222;font-weight:bold;white-space:nowrap;transform-origin:0 0;transform:scaleX(1.1900);">47.78</div>
<div style="position:absolute;left:1582.03px;top:516.99px;font-size:16.20px;line-height:16.20px;color:#222;font-weight:bold;white-space:nowrap;transform-origin:0 0;transform:scaleX(1.1900);">30.19</div>
<div style="position:absolute;left:1747.26px;top:516.99px;font-size:16.20px;line-height:16.20px;color:#222;font-weight:bold;white-space:nowrap;transform-origin:0 0;transform:scaleX(1.1900);">14.54</div>
<div style="position:absolute;left:82px;top:542px;width:24px;height:2px;background:#3a3a3a"></div>
<div style="position:absolute;left:106px;top:542px;width:2245px;height:2px;background:#5d88ad"></div>
<div style="position:absolute;left:2352px;top:187px;width:22px;height:356px;background:#f1f1f1"></div>
<div style="position:absolute;left:2355px;top:204px;width:16px;height:65px;background:#c1c1c1"></div>
<svg style="position:absolute;left:2357px;top:191px;overflow:visible" width="12" height="7" viewBox="0 0 12 7"><path d="M1 6H11L6 1Z" fill="#a3a3a3"/></svg>
<svg style="position:absolute;left:2357px;top:531px;overflow:visible" width="12" height="7" viewBox="0 0 12 7"><path d="M1 1H11L6 6Z" fill="#505050"/></svg>
<div style="position:absolute;left:2088.18px;top:555.92px;font-size:19.00px;line-height:19.00px;color:#444;font-weight:normal;white-space:nowrap;transform-origin:0 0;transform:scaleX(1.1439);">1-10／75</div>
<svg style="position:absolute;left:2220px;top:553px;overflow:visible" width="150" height="19" viewBox="0 0 150 19"><g fill="none" stroke="#555" stroke-width="2.6"><path d="M4 3V16"/><path d="M19 3L12 9.5L19 16"/><path d="M56 3L49 9.5L56 16"/><path d="M90.5 3L97.5 9.5L90.5 16"/><path d="M127 3L134 9.5L127 16"/><path d="M142 3V16"/></g></svg>
<div style="position:absolute;left:73px;top:589px;width:1150px;height:517px;border:1px solid #e8e8e8;border-radius:4px;background:#fff"></div>
<svg style="position:absolute;left:99px;top:606px;overflow:visible" width="24" height="25" viewBox="0 0 24 25"><path d="M1.2 4.6Q12 -0.6 22.8 4.6" fill="none" stroke="#ec4a3c" stroke-width="3"/><path d="M3.4 5V20.8A3 3 0 0 0 6.4 23.8H17.6A3 3 0 0 0 20.6 20.8V5" fill="none" stroke="#ec4a3c" stroke-width="2.8"/><path d="M7.3 9.3V18.8M11.8 9.3V18.8M16.8 9.3V18.8" stroke="#d96b5d" stroke-width="2.6" stroke-linecap="round"/></svg>
<div style="position:absolute;left:506.17px;top:608.14px;font-size:21.82px;line-height:21.82px;color:#333;font-weight:normal;white-space:nowrap;transform-origin:0 0;transform:scaleX(1.3202);">加速時最大負荷</div>
<svg style="position:absolute;left:1135.4px;top:605.8px;overflow:visible" width="29.5" height="26.2" viewBox="0 0 29.5 26.2"><rect x="0" y="0.5" width="29.5" height="25.7" rx="4.5" fill="#1976d2"/><rect x="4.5" y="1.6" width="20.5" height="2.6" fill="#8fc1f1"/><path d="M5.8 13.1L10 10.741999999999999H19.5L23.7 13.1L14.75 20.698Z" fill="#fff"/></svg>
<svg style="position:absolute;left:1179.3px;top:604.2px;overflow:visible" width="26.2" height="28.6" viewBox="0 0 26.2 28.6"><path d="M3 0H16.2L26.2 10V25.6A3 3 0 0 1 23.2 28.6H3A3 3 0 0 1 0 25.6V3A3 3 0 0 1 3 0Z" fill="#1976d2"/><path d="M14.2 4.3V11.3H23.2Z" fill="#fff"/><path d="M8.9 17.3A3.8 3.8 0 1 1 14.4 20.7C13.2 21.4 12.7 22 12.7 23.1" fill="none" stroke="#fff" stroke-width="2.2"/><circle cx="12.7" cy="25.1" r="1.3" fill="#fff"/></svg>
<div style="position:absolute;left:74px;top:650px;width:1150px;height:2px;background:#ebebeb"></div>
<div style="position:absolute;left:73px;top:671px;width:114px;height:31px;background:#3f78d0"></div>
<div style="position:absolute;left:79.18px;top:677.68px;font-size:15.63px;line-height:15.63px;color:#fff;font-weight:normal;white-space:nowrap;transform-origin:0 0;transform:scaleX(1.4100);-webkit-text-stroke:0.3px #fff;">リールNo.</div>
<div style="position:absolute;left:187px;top:671px;width:124px;height:29px;border:1px solid #89acdc;background:#fff"></div>
<div style="position:absolute;left:202.28px;top:676.92px;font-size:17.61px;line-height:17.61px;color:#333;font-weight:normal;white-space:nowrap;transform-origin:0 0;transform:scaleX(1.1850);">R-064387</div>
<svg style="position:absolute;left:1031px;top:672px;overflow:visible" width="22" height="18" viewBox="0 0 22 18"><ellipse cx="11" cy="9" rx="9.6" ry="7.8" fill="none" stroke="#4a90e2" stroke-width="2"/><ellipse cx="11" cy="9" rx="4.8" ry="3.9" fill="#1976d2"/></svg>
<div style="position:absolute;left:1063.82px;top:673.25px;font-size:14.89px;line-height:14.89px;color:#333;font-weight:normal;white-space:nowrap;transform-origin:0 0;transform:scaleX(1.4437);">加速</div>
<svg style="position:absolute;left:1132px;top:672px;overflow:visible" width="22" height="18" viewBox="0 0 22 18"><ellipse cx="11" cy="9" rx="9.6" ry="7.8" fill="none" stroke="#8a8a8a" stroke-width="1.8"/></svg>
<div style="position:absolute;left:1164.74px;top:673.26px;font-size:14.58px;line-height:14.58px;color:#333;font-weight:normal;white-space:nowrap;transform-origin:0 0;transform:scaleX(1.4598);">減速</div>
<div style="position:absolute;left:74px;top:711px;width:1150px;height:2px;background:#efefef"></div>
<svg style="position:absolute;left:595.5px;top:718px;overflow:visible" width="40" height="16" viewBox="0 0 40 16"><path d="M0 8H36" stroke="#0f7a1a" stroke-width="2.4"/><circle cx="18" cy="8" r="7" fill="#0f7a1a"/></svg>
<div style="position:absolute;left:637.86px;top:720.86px;font-size:12.16px;line-height:12.16px;color:#444;font-weight:normal;white-space:nowrap;transform-origin:0 0;transform:scaleX(1.4093);">実績値</div>
<svg style="position:absolute;left:0;top:0" width="2396" height="1160" viewBox="0 0 2396 1160"><line x1="140" y1="790.5" x2="1110" y2="790.5" stroke="#ececec" stroke-width="1.3"/><line x1="140" y1="833.6" x2="1110" y2="833.6" stroke="#ececec" stroke-width="1.3"/><line x1="140" y1="876.7" x2="1110" y2="876.7" stroke="#ececec" stroke-width="1.3"/><line x1="140" y1="919.8" x2="1110" y2="919.8" stroke="#ececec" stroke-width="1.3"/><line x1="140" y1="962.9" x2="1110" y2="962.9" stroke="#ececec" stroke-width="1.3"/><line x1="140" y1="1006.5" x2="1110" y2="1006.5" stroke="#6e6e6e" stroke-width="1.6"/><line x1="140.0" y1="1006" x2="140.0" y2="1011" stroke="#6e6e6e" stroke-width="1.3"/><line x1="301.66666666666663" y1="1006" x2="301.66666666666663" y2="1011" stroke="#6e6e6e" stroke-width="1.3"/><line x1="463.3333333333333" y1="1006" x2="463.3333333333333" y2="1011" stroke="#6e6e6e" stroke-width="1.3"/><line x1="625.0" y1="1006" x2="625.0" y2="1011" stroke="#6e6e6e" stroke-width="1.3"/><line x1="786.6666666666666" y1="1006" x2="786.6666666666666" y2="1011" stroke="#6e6e6e" stroke-width="1.3"/><line x1="948.3333333333333" y1="1006" x2="948.3333333333333" y2="1011" stroke="#6e6e6e" stroke-width="1.3"/><line x1="1110.0" y1="1006" x2="1110.0" y2="1011" stroke="#6e6e6e" stroke-width="1.3"/><line x1="140" y1="800.0904" x2="1110" y2="800.0904" stroke="#777" stroke-width="2.2" stroke-dasharray="8,6"/><polyline points="140.0,904.6 301.7,870.3 463.3,848.0 625.0,855.5 786.7,818.5 948.3,814.4 1110.0,800.1" fill="none" stroke="#12891f" stroke-width="2.2"/><circle cx="140.0" cy="904.6" r="3.2" fill="#0b7a16"/><circle cx="301.7" cy="870.3" r="3.2" fill="#0b7a16"/><circle cx="463.3" cy="848.0" r="3.2" fill="#0b7a16"/><circle cx="625.0" cy="855.5" r="3.2" fill="#0b7a16"/><circle cx="786.7" cy="818.5" r="3.2" fill="#0b7a16"/><circle cx="948.3" cy="814.4" r="3.2" fill="#0b7a16"/><circle cx="1110.0" cy="800.1" r="3.2" fill="#0b7a16"/><rect x="143" y="1048" width="969" height="43.5" fill="#e7eefa"/><rect x="143" y="1048" width="969" height="7.5" fill="#dce3ee"/><polygon points="143,1091.5 143.0,1084.5 304.5,1076.8 466.0,1071.8 627.5,1073.5 789.0,1065.1 950.5,1064.2 1112.0,1061.0 1112,1091.5" fill="#d3e0f7"/><polyline points="143.0,1084.5 304.5,1076.8 466.0,1071.8 627.5,1073.5 789.0,1065.1 950.5,1064.2 1112.0,1061.0" fill="none" stroke="#b7cbee" stroke-width="1"/><line x1="143" y1="1052" x2="143" y2="1092" stroke="#aaa" stroke-width="1"/><rect x="139" y="1062" width="8" height="23" rx="3" fill="#fff" stroke="#b0b0b0" stroke-width="1"/><line x1="1112" y1="1052" x2="1112" y2="1092" stroke="#aaa" stroke-width="1"/><rect x="1108" y="1062" width="8" height="23" rx="3" fill="#fff" stroke="#b0b0b0" stroke-width="1"/></svg>
<div style="position:absolute;left:108.30px;top:752.30px;font-size:12.02px;line-height:12.02px;color:#666;font-weight:normal;white-space:nowrap;transform-origin:0 0;transform:scaleX(1.5139);">負荷[%]</div>
<div style="position:absolute;left:109.05px;top:783.00px;font-size:15.00px;line-height:15.00px;color:#666;font-weight:normal;white-space:nowrap;transform-origin:0 0;transform:scaleX(1.2000);">50</div>
<div style="position:absolute;left:109.23px;top:826.10px;font-size:15.00px;line-height:15.00px;color:#666;font-weight:normal;white-space:nowrap;transform-origin:0 0;transform:scaleX(1.2000);">40</div>
<div style="position:absolute;left:109.14px;top:869.20px;font-size:15.00px;line-height:15.00px;color:#666;font-weight:normal;white-space:nowrap;transform-origin:0 0;transform:scaleX(1.2000);">30</div>
<div style="position:absolute;left:108.96px;top:912.30px;font-size:15.00px;line-height:15.00px;color:#666;font-weight:normal;white-space:nowrap;transform-origin:0 0;transform:scaleX(1.2000);">20</div>
<div style="position:absolute;left:108.78px;top:955.40px;font-size:15.00px;line-height:15.00px;color:#666;font-weight:normal;white-space:nowrap;transform-origin:0 0;transform:scaleX(1.2000);">10</div>
<div style="position:absolute;left:119.15px;top:998.50px;font-size:15.00px;line-height:15.00px;color:#666;font-weight:normal;white-space:nowrap;transform-origin:0 0;transform:scaleX(1.2000);">0</div>
<div style="position:absolute;left:111.62px;top:1015.00px;font-size:13.00px;line-height:13.00px;color:#666;font-weight:normal;white-space:nowrap;transform-origin:0 0;transform:scaleX(1.2000);">1307.31</div>
<div style="position:absolute;left:273.21px;top:1015.00px;font-size:13.00px;line-height:13.00px;color:#666;font-weight:normal;white-space:nowrap;transform-origin:0 0;transform:scaleX(1.2000);">1718.85</div>
<div style="position:absolute;left:435.03px;top:1015.00px;font-size:13.00px;line-height:13.00px;color:#666;font-weight:normal;white-space:nowrap;transform-origin:0 0;transform:scaleX(1.2000);">2047.48</div>
<div style="position:absolute;left:596.77px;top:1015.00px;font-size:13.00px;line-height:13.00px;color:#666;font-weight:normal;white-space:nowrap;transform-origin:0 0;transform:scaleX(1.2000);">2332.02</div>
<div style="position:absolute;left:758.36px;top:1015.00px;font-size:13.00px;line-height:13.00px;color:#666;font-weight:normal;white-space:nowrap;transform-origin:0 0;transform:scaleX(1.2000);">2582.43</div>
<div style="position:absolute;left:919.95px;top:1015.00px;font-size:13.00px;line-height:13.00px;color:#666;font-weight:normal;white-space:nowrap;transform-origin:0 0;transform:scaleX(1.2000);">2813.14</div>
<div style="position:absolute;left:1092.70px;top:1015.00px;font-size:13.00px;line-height:13.00px;color:#666;font-weight:normal;white-space:nowrap;transform-origin:0 0;transform:scaleX(1.2000);">3230</div>
<div style="position:absolute;left:0;top:0;width:1211.7px;height:1160px;overflow:hidden">
<div style="position:absolute;left:1127.58px;top:998.68px;font-size:15.5px;line-height:15.5px;color:#777;white-space:nowrap;transform-origin:0 0;transform:scaleX(1.22);">UW径[mm]</div>
</div>
<div style="position:absolute;left:1231px;top:589px;width:1150px;height:517px;border:1px solid #e8e8e8;border-radius:4px;background:#fff"></div>
<svg style="position:absolute;left:1256.5px;top:606px;overflow:visible" width="24" height="25" viewBox="0 0 24 25"><path d="M1.2 4.6Q12 -0.6 22.8 4.6" fill="none" stroke="#ec4a3c" stroke-width="3"/><path d="M3.4 5V20.8A3 3 0 0 0 6.4 23.8H17.6A3 3 0 0 0 20.6 20.8V5" fill="none" stroke="#ec4a3c" stroke-width="2.8"/><path d="M7.3 9.3V18.8M11.8 9.3V18.8M16.8 9.3V18.8" stroke="#d96b5d" stroke-width="2.6" stroke-linecap="round"/></svg>
<div style="position:absolute;left:1706.67px;top:609.66px;font-size:20.51px;line-height:20.51px;color:#333;font-weight:normal;white-space:nowrap;transform-origin:0 0;transform:scaleX(1.4064);">加速時間</div>
<svg style="position:absolute;left:2292.5px;top:605.8px;overflow:visible" width="29.5" height="26.2" viewBox="0 0 29.5 26.2"><rect x="0" y="0.5" width="29.5" height="25.7" rx="4.5" fill="#1976d2"/><rect x="4.5" y="1.6" width="20.5" height="2.6" fill="#8fc1f1"/><path d="M5.8 13.1L10 10.741999999999999H19.5L23.7 13.1L14.75 20.698Z" fill="#fff"/></svg>
<svg style="position:absolute;left:2336.8px;top:604.2px;overflow:visible" width="26.2" height="28.6" viewBox="0 0 26.2 28.6"><path d="M3 0H16.2L26.2 10V25.6A3 3 0 0 1 23.2 28.6H3A3 3 0 0 1 0 25.6V3A3 3 0 0 1 3 0Z" fill="#1976d2"/><path d="M14.2 4.3V11.3H23.2Z" fill="#fff"/><path d="M8.9 17.3A3.8 3.8 0 1 1 14.4 20.7C13.2 21.4 12.7 22 12.7 23.1" fill="none" stroke="#fff" stroke-width="2.2"/><circle cx="12.7" cy="25.1" r="1.3" fill="#fff"/></svg>
<div style="position:absolute;left:1232px;top:650px;width:1150px;height:2px;background:#ebebeb"></div>
<div style="position:absolute;left:1231px;top:671px;width:114px;height:31px;background:#3f78d0"></div>
<div style="position:absolute;left:1237.18px;top:677.68px;font-size:15.63px;line-height:15.63px;color:#fff;font-weight:normal;white-space:nowrap;transform-origin:0 0;transform:scaleX(1.4100);-webkit-text-stroke:0.3px #fff;">リールNo.</div>
<div style="position:absolute;left:1345px;top:671px;width:124px;height:29px;border:1px solid #89acdc;background:#fff"></div>
<div style="position:absolute;left:1360.28px;top:676.92px;font-size:17.61px;line-height:17.61px;color:#333;font-weight:normal;white-space:nowrap;transform-origin:0 0;transform:scaleX(1.1850);">R-064387</div>
<svg style="position:absolute;left:2188.5px;top:672px;overflow:visible" width="22" height="18" viewBox="0 0 22 18"><ellipse cx="11" cy="9" rx="9.6" ry="7.8" fill="none" stroke="#4a90e2" stroke-width="2"/><ellipse cx="11" cy="9" rx="4.8" ry="3.9" fill="#1976d2"/></svg>
<div style="position:absolute;left:2221.32px;top:673.25px;font-size:14.89px;line-height:14.89px;color:#333;font-weight:normal;white-space:nowrap;transform-origin:0 0;transform:scaleX(1.4437);">加速</div>
<svg style="position:absolute;left:2289.5px;top:672px;overflow:visible" width="22" height="18" viewBox="0 0 22 18"><ellipse cx="11" cy="9" rx="9.6" ry="7.8" fill="none" stroke="#8a8a8a" stroke-width="1.8"/></svg>
<div style="position:absolute;left:2322.24px;top:673.26px;font-size:14.58px;line-height:14.58px;color:#333;font-weight:normal;white-space:nowrap;transform-origin:0 0;transform:scaleX(1.4598);">減速</div>
<div style="position:absolute;left:1232px;top:711px;width:1150px;height:2px;background:#efefef"></div>
<svg style="position:absolute;left:1682px;top:718px;overflow:visible" width="40" height="16" viewBox="0 0 40 16"><path d="M0 8H36" stroke="#0f7a1a" stroke-width="2.4"/><circle cx="18" cy="8" r="7" fill="#0f7a1a"/></svg>
<div style="position:absolute;left:1724.85px;top:720.05px;font-size:13.64px;line-height:13.64px;color:#444;font-weight:normal;white-space:nowrap;transform-origin:0 0;transform:scaleX(1.2675);">現状設定値</div>
<svg style="position:absolute;left:1826px;top:718px;overflow:visible" width="40" height="16" viewBox="0 0 40 16"><path d="M0 8H36" stroke="#cfcfcf" stroke-width="2"/><circle cx="18" cy="8" r="6.5" fill="#fff" stroke="#cfcfcf" stroke-width="2"/></svg>
<div style="position:absolute;left:1867.07px;top:719.91px;font-size:13.78px;line-height:13.78px;color:#c8c8c8;font-weight:normal;white-space:nowrap;transform-origin:0 0;transform:scaleX(1.3023);">計算値</div>
<svg style="position:absolute;left:0;top:0" width="2396" height="1160" viewBox="0 0 2396 1160"><line x1="1309.5" y1="790.5" x2="2267.5" y2="790.5" stroke="#ececec" stroke-width="1.3"/><line x1="1309.5" y1="833.6" x2="2267.5" y2="833.6" stroke="#ececec" stroke-width="1.3"/><line x1="1309.5" y1="876.7" x2="2267.5" y2="876.7" stroke="#ececec" stroke-width="1.3"/><line x1="1309.5" y1="919.8" x2="2267.5" y2="919.8" stroke="#ececec" stroke-width="1.3"/><line x1="1309.5" y1="962.9" x2="2267.5" y2="962.9" stroke="#ececec" stroke-width="1.3"/><line x1="1309.5" y1="1006.5" x2="2267.5" y2="1006.5" stroke="#6e6e6e" stroke-width="1.6"/><line x1="1309.5" y1="1006" x2="1309.5" y2="1011" stroke="#6e6e6e" stroke-width="1.3"/><line x1="1469.1666666666667" y1="1006" x2="1469.1666666666667" y2="1011" stroke="#6e6e6e" stroke-width="1.3"/><line x1="1628.8333333333333" y1="1006" x2="1628.8333333333333" y2="1011" stroke="#6e6e6e" stroke-width="1.3"/><line x1="1788.5" y1="1006" x2="1788.5" y2="1011" stroke="#6e6e6e" stroke-width="1.3"/><line x1="1948.1666666666665" y1="1006" x2="1948.1666666666665" y2="1011" stroke="#6e6e6e" stroke-width="1.3"/><line x1="2107.833333333333" y1="1006" x2="2107.833333333333" y2="1011" stroke="#6e6e6e" stroke-width="1.3"/><line x1="2267.5" y1="1006" x2="2267.5" y2="1011" stroke="#6e6e6e" stroke-width="1.3"/><polyline points="1309.5,833.5 1469.2,833.5 1628.8,822.5 1788.5,822.5 1948.2,822.5 2107.8,805.2 2267.5,816.0" fill="none" stroke="#12891f" stroke-width="2.2"/><circle cx="1309.5" cy="833.5" r="3.2" fill="#0b7a16"/><circle cx="1469.2" cy="833.5" r="3.2" fill="#0b7a16"/><circle cx="1628.8" cy="822.5" r="3.2" fill="#0b7a16"/><circle cx="1788.5" cy="822.5" r="3.2" fill="#0b7a16"/><circle cx="1948.2" cy="822.5" r="3.2" fill="#0b7a16"/><circle cx="2107.8" cy="805.2" r="3.2" fill="#0b7a16"/><circle cx="2267.5" cy="816.0" r="3.2" fill="#0b7a16"/><rect x="1312.5" y="1048" width="957.0" height="43.5" fill="#e7eefa"/><rect x="1312.5" y="1048" width="957.0" height="7.5" fill="#dce3ee"/><polygon points="1312.5,1091.5 1312.5,1084.5 1472.0,1084.5 1631.5,1075.4 1791.0,1075.4 1950.5,1075.4 2110.0,1061.0 2269.5,1070.0 2269.5,1091.5" fill="#d3e0f7"/><polyline points="1312.5,1084.5 1472.0,1084.5 1631.5,1075.4 1791.0,1075.4 1950.5,1075.4 2110.0,1061.0 2269.5,1070.0" fill="none" stroke="#b7cbee" stroke-width="1"/><line x1="1312.5" y1="1052" x2="1312.5" y2="1092" stroke="#aaa" stroke-width="1"/><rect x="1308.5" y="1062" width="8" height="23" rx="3" fill="#fff" stroke="#b0b0b0" stroke-width="1"/><line x1="2269.5" y1="1052" x2="2269.5" y2="1092" stroke="#aaa" stroke-width="1"/><rect x="2265.5" y="1062" width="8" height="23" rx="3" fill="#fff" stroke="#b0b0b0" stroke-width="1"/></svg>
<div style="position:absolute;left:1260.89px;top:753.12px;font-size:11.06px;line-height:11.06px;color:#666;font-weight:normal;white-space:nowrap;transform-origin:0 0;transform:scaleX(1.6119);">加速時間 [s]</div>
<div style="position:absolute;left:1268.27px;top:783.00px;font-size:15.00px;line-height:15.00px;color:#666;font-weight:normal;white-space:nowrap;transform-origin:0 0;transform:scaleX(1.2000);">100</div>
<div style="position:absolute;left:1278.55px;top:826.10px;font-size:15.00px;line-height:15.00px;color:#666;font-weight:normal;white-space:nowrap;transform-origin:0 0;transform:scaleX(1.2000);">80</div>
<div style="position:absolute;left:1278.46px;top:869.20px;font-size:15.00px;line-height:15.00px;color:#666;font-weight:normal;white-space:nowrap;transform-origin:0 0;transform:scaleX(1.2000);">60</div>
<div style="position:absolute;left:1278.73px;top:912.30px;font-size:15.00px;line-height:15.00px;color:#666;font-weight:normal;white-space:nowrap;transform-origin:0 0;transform:scaleX(1.2000);">40</div>
<div style="position:absolute;left:1278.46px;top:955.40px;font-size:15.00px;line-height:15.00px;color:#666;font-weight:normal;white-space:nowrap;transform-origin:0 0;transform:scaleX(1.2000);">20</div>
<div style="position:absolute;left:1288.65px;top:998.50px;font-size:15.00px;line-height:15.00px;color:#666;font-weight:normal;white-space:nowrap;transform-origin:0 0;transform:scaleX(1.2000);">0</div>
<div style="position:absolute;left:1281.12px;top:1015.00px;font-size:13.00px;line-height:13.00px;color:#666;font-weight:normal;white-space:nowrap;transform-origin:0 0;transform:scaleX(1.2000);">1307.31</div>
<div style="position:absolute;left:1440.71px;top:1015.00px;font-size:13.00px;line-height:13.00px;color:#666;font-weight:normal;white-space:nowrap;transform-origin:0 0;transform:scaleX(1.2000);">1718.85</div>
<div style="position:absolute;left:1600.53px;top:1015.00px;font-size:13.00px;line-height:13.00px;color:#666;font-weight:normal;white-space:nowrap;transform-origin:0 0;transform:scaleX(1.2000);">2047.48</div>
<div style="position:absolute;left:1760.27px;top:1015.00px;font-size:13.00px;line-height:13.00px;color:#666;font-weight:normal;white-space:nowrap;transform-origin:0 0;transform:scaleX(1.2000);">2332.02</div>
<div style="position:absolute;left:1919.86px;top:1015.00px;font-size:13.00px;line-height:13.00px;color:#666;font-weight:normal;white-space:nowrap;transform-origin:0 0;transform:scaleX(1.2000);">2582.43</div>
<div style="position:absolute;left:2079.45px;top:1015.00px;font-size:13.00px;line-height:13.00px;color:#666;font-weight:normal;white-space:nowrap;transform-origin:0 0;transform:scaleX(1.2000);">2813.14</div>
<div style="position:absolute;left:2250.20px;top:1015.00px;font-size:13.00px;line-height:13.00px;color:#666;font-weight:normal;white-space:nowrap;transform-origin:0 0;transform:scaleX(1.2000);">3230</div>
<div style="position:absolute;left:0;top:0;width:2369.5px;height:1160px;overflow:hidden">
<div style="position:absolute;left:2285.38px;top:998.68px;font-size:15.5px;line-height:15.5px;color:#777;white-space:nowrap;transform-origin:0 0;transform:scaleX(1.22);">UW径[mm]</div>
</div>
</body></html>
